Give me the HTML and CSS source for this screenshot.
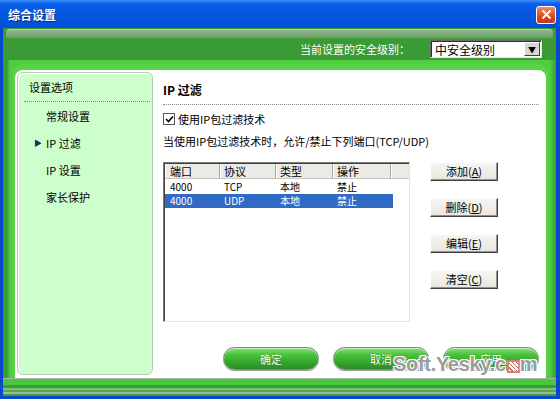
FILE: index.html
```html
<!DOCTYPE html>
<html lang="zh-CN">
<head>
<meta charset="UTF-8">
<title>综合设置</title>
<link rel="stylesheet" href="styles.css">
</head>
<body>

<div class="window">
  <div class="titlebar">
    <span class="title">综合设置</span>
    <span class="close">
      <svg width="11" height="11" viewBox="0 0 11 11"><path d="M1.5 1.5 L9.5 9.5 M9.5 1.5 L1.5 9.5" stroke="#fff" stroke-width="2"/></svg>
    </span>
  </div>

  <div class="frame">
    <div class="frame-head">
      <div class="strip"></div>
      <div class="level-bar">
        <span class="level-label">当前设置的安全级别：</span>
        <div class="select">
          <span>中安全级别</span>
          <span class="select-btn">&#9660;</span>
        </div>
      </div>
    </div>

    <div class="frame-body">
      <div class="panel">
        <div class="sidebar">
          <div class="side-title">设置选项</div>
          <ul class="side-menu">
            <li><span class="mark"></span>常规设置</li>
            <li class="active"><span class="mark">&#9654;</span>IP 过滤</li>
            <li><span class="mark"></span>IP 设置</li>
            <li><span class="mark"></span>家长保护</li>
          </ul>
        </div>

        <div class="content">
          <h2 class="section-title">IP 过滤</h2>
          <label class="check-row">
            <span class="checkbox">
              <svg width="9" height="9" viewBox="0 0 9 9"><path d="M1 4 L3.5 6.5 L8 1.5" stroke="#000" stroke-width="1.6" fill="none"/></svg>
            </span>
            使用IP包过滤技术
          </label>
          <p class="hint">当使用IP包过滤技术时，允许/禁止下列端口(TCP/UDP)</p>

          <div class="list-row">
            <div class="listbox">
              <div class="list-head">
                <span class="col c1">端口</span>
                <span class="col c2">协议</span>
                <span class="col c3">类型</span>
                <span class="col c4">操作</span>
                <span class="col rest"></span>
              </div>
              <div class="list-item">
                <span class="col c1">4000</span>
                <span class="col c2">TCP</span>
                <span class="col c3">本地</span>
                <span class="col c4">禁止</span>
              </div>
              <div class="list-item selected">
                <span class="col c1">4000</span>
                <span class="col c2">UDP</span>
                <span class="col c3">本地</span>
                <span class="col c4">禁止</span>
              </div>
            </div>

            <div class="side-buttons">
              <button class="btn">添加(<u>A</u>)</button>
              <button class="btn">删除(<u>D</u>)</button>
              <button class="btn">编辑(<u>E</u>)</button>
              <button class="btn">清空(<u>C</u>)</button>
            </div>
          </div>

          <div class="actions">
            <button class="pill">确定</button>
            <button class="pill">取消</button>
            <button class="pill">应用</button>
          </div>
        </div>
      </div>
    </div>

    <div class="frame-foot"></div>
  </div>

  <div class="watermark">Soft.Yesky.c<span class="wm-icon"></span>m</div>
</div>

</body>
</html>
```

FILE: styles.css
```css
* {
  box-sizing: border-box;
}
body {
  margin: 0;
  background: #0848cc;
  font-family: "Noto Sans CJK SC", "DejaVu Sans", sans-serif;
  font-size: 11px;
  color: #000;
}
.window {
  position: relative;
  width: 560px;
  height: 399px;
  display: flex;
  flex-direction: column;
  background: #0848cc;
  overflow: hidden;
}

/* title bar */
.titlebar {
  height: 28px;
  display: flex;
  align-items: center;
  justify-content: space-between;
  padding: 0 4px 0 8px;
  background: linear-gradient(#3d8ef6 0, #0a5fe9 4px, #0556e2 50%, #0450d6 100%);
}
.title {
  color: #fff;
  font-size: 12px;
  font-weight: bold;
  text-shadow: 1px 1px 0 #0a2a7a;
}
.close {
  width: 20px;
  height: 18px;
  margin-top: 1px;
  display: flex;
  align-items: center;
  justify-content: center;
  border: 1px solid #fff;
  border-radius: 3px;
  background: linear-gradient(#f08a66, #d8461e 60%, #c23a14);
}

/* green frame */
.frame {
  flex: 1;
  margin: 0 4px 3px 3px;
  display: flex;
  flex-direction: column;
  background: #3a9c34;
}
.frame-head {
  height: 32px;
  display: flex;
  flex-direction: column;
  background: #3a9a34;
}
.strip {
  height: 9px;
  margin: 1px 3px 0 3px;
  border-radius: 4px 4px 0 0;
  border-top: 1px solid #b6d2b0;
  background: linear-gradient(#8fb48a, #6e9e68);
}
.level-bar {
  flex: 1;
  display: flex;
  align-items: center;
  justify-content: flex-end;
  padding-right: 14px;
  gap: 20px;
}
.level-label {
  color: #fff;
}
.select {
  width: 112px;
  height: 18px;
  display: flex;
  align-items: center;
  justify-content: space-between;
  padding: 0 1px 0 4px;
  font-size: 12px;
  background: #fff;
  border: 1px solid;
  border-color: #6a6a6a #e8e8e8 #e8e8e8 #6a6a6a;
  box-shadow: inset 1px 1px 0 #303030;
}
.select-btn {
  width: 16px;
  height: 14px;
  font-size: 8px;
  line-height: 13px;
  text-align: center;
  background: #d8d6ce;
  border: 1px solid;
  border-color: #fff #404040 #404040 #fff;
}

.frame-body {
  flex: 1;
  display: flex;
  padding: 10px 7px 0 9px;
  background: linear-gradient(to right, #3a9c34 0, #3a9c34 4px, #50cc40 7px, #50cc40 calc(100% - 6px), #3a9c34 100%);
}
.panel {
  flex: 1;
  display: flex;
  margin: 0 3px;
  padding: 2px 0 3px 2px;
  background: #fff;
  border-radius: 8px 8px 0 0;
  box-shadow: 0 -4px 0 2px #58d448;
}
.frame-foot {
  height: 18px;
  background: linear-gradient(#a8b8a8 0, #a8b8a8 1px, #48c83a 1px, #48c83a 7px, #36a030 7px, #36a030 10px, #80bc7c 10px, #80bc7c 12px, #5aa456 12px, #5aa456 14px, #8cc488 14px, #8cc488 16px, #4c944a 16px);
}

/* left menu */
.sidebar {
  width: 136px;
  background: #ccffcc;
  border: 1px solid #b4ccb4;
  border-radius: 6px;
  box-shadow: inset 1px 1px 0 #fff;
}
.side-title {
  line-height: 16px;
  padding: 6px 0 6px 5px;
  margin: 0 2px 0 6px;
  border-bottom: 1px dotted #7c8c7c;
}
.side-menu {
  list-style: none;
  margin: 0;
  padding: 0 0 0 16px;
}
.side-menu li {
  display: flex;
  align-items: center;
  height: 27px;
}
.mark {
  width: 12px;
  font-size: 8px;
  color: #1c2c60;
}

/* right content */
.content {
  flex: 1;
  display: flex;
  flex-direction: column;
  padding: 10px 7px 0 10px;
}
.section-title {
  margin: 0;
  font-size: 12px;
  font-weight: bold;
  line-height: 16px;
  padding-bottom: 6px;
  border-bottom: 1px dotted #888;
}
.check-row {
  display: flex;
  align-items: center;
  gap: 3px;
  margin-top: 6px;
  line-height: 16px;
}
.checkbox {
  width: 12px;
  height: 12px;
  display: flex;
  align-items: center;
  justify-content: center;
  border: 1px solid #555;
  background: #fff;
}
.hint {
  margin: 6px 0 0 0;
  line-height: 16px;
}

.list-row {
  display: flex;
  margin-top: 13px;
}
.listbox {
  width: 247px;
  height: 160px;
  background: #fff;
  border: 1px solid;
  border-color: #7a7a7a #e4e4e4 #e4e4e4 #7a7a7a;
  box-shadow: inset 1px 1px 0 #404040;
  padding: 1px 0 0 1px;
}
.list-head {
  display: flex;
  height: 15px;
  background: #ebeae4;
}
.list-head .col {
  line-height: 14px;
  border-right: 1px solid #a8a8a0;
  border-bottom: 1px solid #c8c8c0;
  box-shadow: inset 1px 0 0 #fff;
}
.list-head .rest {
  flex: 1;
  border-right: none;
}
.list-item {
  display: flex;
  width: 228px;
  height: 14px;
  font-size: 10px;
  line-height: 14px;
}
.list-head + .list-item {
  margin-top: 1px;
}
.list-item.selected {
  background: #316ac5;
  color: #fff;
}
.col {
  padding-left: 4px;
  white-space: nowrap;
}
.c1 { width: 55px; padding-left: 5px; }
.c2 { width: 56px; }
.c3 { width: 57px; }
.c4 { width: 58px; }

.side-buttons {
  display: flex;
  flex-direction: column;
  gap: 17px;
  margin-left: 20px;
}
.btn {
  width: 68px;
  height: 19px;
  padding: 0;
  font-family: inherit;
  font-size: 11px;
  line-height: 15px;
  background: linear-gradient(#f6f6f2, #e8e6de);
  border: 1px solid;
  border-color: #fff #404040 #404040 #fff;
  box-shadow: inset -1px -1px 0 #909090;
}

.actions {
  display: flex;
  justify-content: flex-end;
  gap: 14px;
  margin-top: 25px;
}
.pill {
  width: 96px;
  height: 23px;
  padding: 0;
  font-family: inherit;
  font-size: 11px;
  color: #fff;
  border: 1px solid #7c8c7c;
  border-radius: 12px;
  background: linear-gradient(#8ce07e 0, #4cc43c 30%, #34a82c 65%, #2c8c26 100%);
  box-shadow: inset 0 1px 0 #c8f0c0, 0 1px 0 #a0a0a0;
  text-shadow: 0 0 1px #1a5a14;
}

/* watermark over the screenshot */
.watermark {
  position: absolute;
  left: 393px;
  top: 353px;
  font-family: "Liberation Sans", sans-serif;
  font-size: 20px;
  font-weight: bold;
  color: #9c9c9c;
  letter-spacing: -0.3px;
  text-shadow: 1px 1px 0 #fff, -1px -1px 0 #fff, 1px -1px 0 #fff, -1px 1px 0 #fff;
  display: flex;
  align-items: center;
}
.wm-icon {
  width: 13px;
  height: 13px;
  margin: 3px 0 0 1px;
  border: 2px solid #e07a7a;
  background: repeating-linear-gradient(45deg, #fff 0 2px, #b86a6a 2px 3px);
}
```
